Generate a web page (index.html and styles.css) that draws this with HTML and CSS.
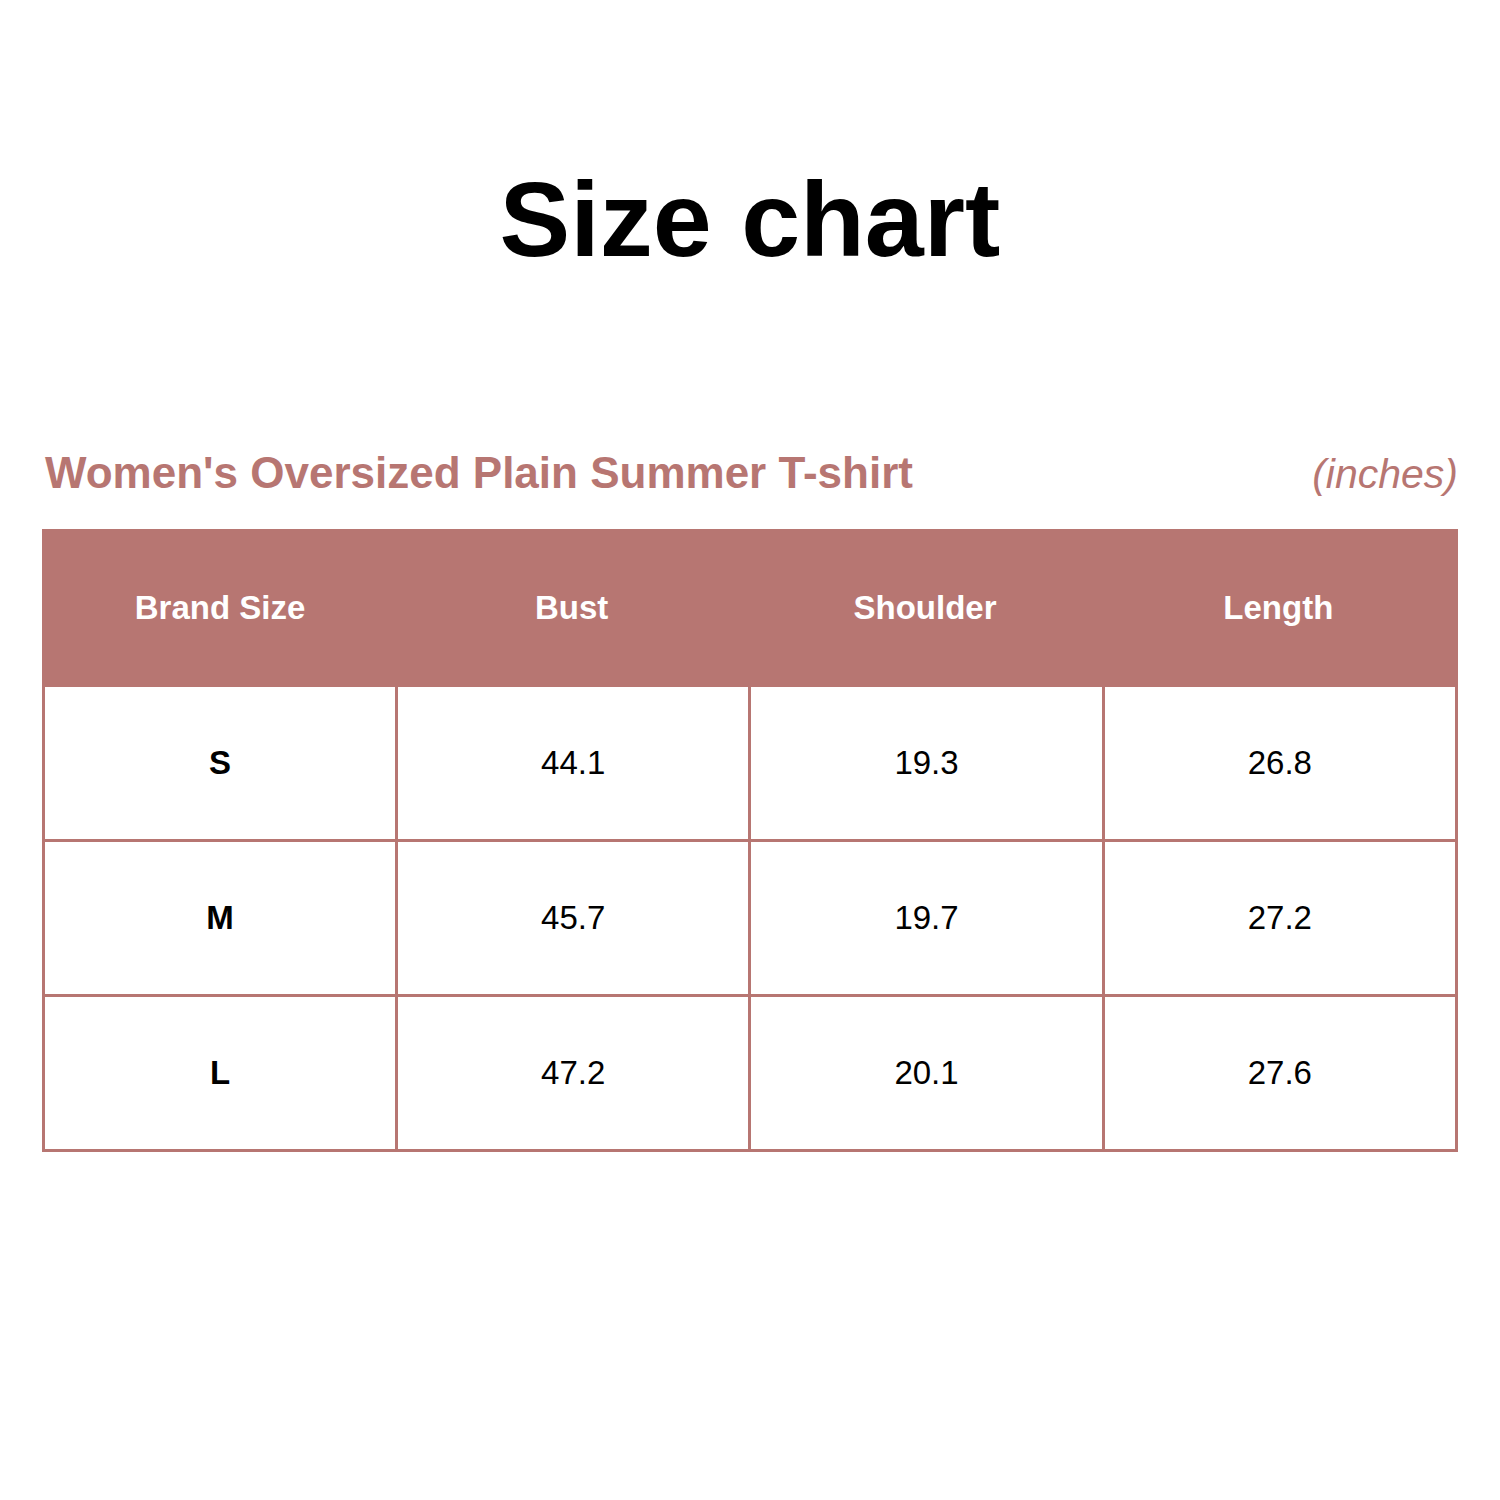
FILE: index.html
```html
<!DOCTYPE html>
<html lang="en">
<head>
<meta charset="utf-8">
<title>Size chart</title>
<link rel="stylesheet" href="styles.css">
</head>
<body>
<main class="page">
  <h1 class="title">Size chart</h1>
  <div class="subhead">
    <h2 class="product">Women's Oversized Plain Summer T-shirt</h2>
    <span class="unit">(inches)</span>
  </div>
  <div class="chart">
    <div class="cell head">Brand Size</div>
    <div class="cell head">Bust</div>
    <div class="cell head">Shoulder</div>
    <div class="cell head">Length</div>

    <div class="cell size first-row">S</div>
    <div class="cell first-row">44.1</div>
    <div class="cell first-row">19.3</div>
    <div class="cell first-row">26.8</div>

    <div class="cell size">M</div>
    <div class="cell">45.7</div>
    <div class="cell">19.7</div>
    <div class="cell">27.2</div>

    <div class="cell size">L</div>
    <div class="cell">47.2</div>
    <div class="cell">20.1</div>
    <div class="cell">27.6</div>
  </div>
</main>
</body>
</html>
```

FILE: styles.css
```css
html, body {
  margin: 0;
  padding: 0;
  background: #ffffff;
}

.page {
  width: 1416px;
  padding: 166px 42px 0;
  font-family: "Liberation Sans", Arial, sans-serif;
  color: #000;
}

.title {
  margin: 0;
  font-size: 106px;
  line-height: 106px;
  font-weight: 700;
  text-align: center;
}

.subhead {
  margin-top: 179px;
  display: flex;
  justify-content: space-between;
  align-items: baseline;
  color: #b77672;
}

.product {
  margin: 0;
  padding-left: 3px;
  font-size: 44px;
  line-height: 43px;
  font-weight: 700;
}

.unit {
  font-size: 41px;
  line-height: 43px;
  font-style: italic;
}

.chart {
  margin-top: 33px;
  box-sizing: border-box;
  width: 1416px;
  border: 3px solid #b77672;
  display: grid;
  grid-template-columns: 350px repeat(3, 1fr);
  grid-template-rows: 155px 152px 155px 155px;
}

.cell {
  display: flex;
  align-items: center;
  justify-content: center;
  font-size: 33px;
  border-left: 3px solid #b77672;
  border-top: 3px solid #b77672;
}

.cell:nth-child(4n+1) {
  border-left: none;
}

.head {
  border: none;
  background: #b77672;
  color: #ffffff;
  font-weight: 700;
  padding-bottom: 3px;
}

.first-row {
  border-top: none;
}

.size {
  font-weight: 700;
}
```
